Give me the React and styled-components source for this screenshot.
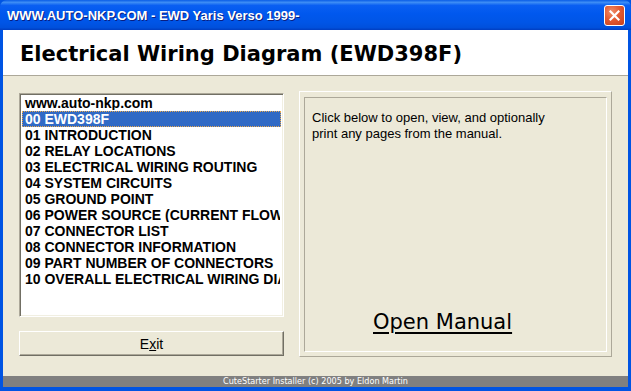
import styled, { createGlobalStyle } from 'styled-components';

const FACE = `#ECE9D8`;
const SHADOW = `#ACA899`;
const DARK = `#716F64`;
const XP_BLUE = `#0054E3`;

const GlobalStyle = createGlobalStyle`
  html, body {
    margin: 0;
    padding: 0;
    background: #fff;
  }
`;

const items = [
  'www.auto-nkp.com',
  '00 EWD398F',
  '01 INTRODUCTION',
  '02 RELAY LOCATIONS',
  '03 ELECTRICAL WIRING ROUTING',
  '04 SYSTEM CIRCUITS',
  '05 GROUND POINT',
  '06 POWER SOURCE (CURRENT FLOW',
  '07 CONNECTOR LIST',
  '08 CONNECTOR INFORMATION',
  '09 PART NUMBER OF CONNECTORS',
  '10 OVERALL ELECTRICAL WIRING DIA',
];

export default function App() {
  return (
    <>
      <GlobalStyle />
      <Window>
        <TitleBar>
          <Caption>WWW.AUTO-NKP.COM - EWD Yaris Verso 1999-</Caption>
          <CloseButton aria-label="Close">
            <svg width="11" height="11" viewBox="0 0 11 11">
              <path d="M1.5 1.5 L9.5 9.5 M9.5 1.5 L1.5 9.5" stroke="#fff" strokeWidth="2.2" strokeLinecap="square" />
            </svg>
          </CloseButton>
        </TitleBar>
        <Client>
          <Header>Electrical Wiring Diagram (EWD398F)</Header>
          <Main>
            <LeftColumn>
              <ListBox>
                {items.map((item, i) => (
                  <ListItem key={item} $selected={i === 1}>
                    {item}
                  </ListItem>
                ))}
              </ListBox>
              <Button>
                E<u>x</u>it
              </Button>
            </LeftColumn>
            <Panel>
              <PanelInner>
                <Info>
                  Click below to open, view, and optionally
                  <br />
                  print any pages from the manual.
                </Info>
                <OpenLink href="#">Open Manual</OpenLink>
              </PanelInner>
            </Panel>
          </Main>
          <StatusBar>CuteStarter Installer (c) 2005 by Eldon Martin</StatusBar>
        </Client>
      </Window>
    </>
  );
}

const Window = styled.div`
  width: 631px;
  height: 391px;
  display: flex;
  flex-direction: column;
  background: ${XP_BLUE};
  box-sizing: border-box;
  padding-bottom: 4px;
  overflow: hidden;
`;

const TitleBar = styled.div`
  height: 30px;
  flex: none;
  display: flex;
  align-items: center;
  justify-content: space-between;
  padding: 0 6px 0 7px;
  border-radius: 7px 7px 0 0;
  background: linear-gradient(
    #0A5DE6 0%,
    #3D8DF5 8%,
    #0A5FF2 18%,
    #0058EE 45%,
    #0055E6 75%,
    #0050DC 92%,
    #003DC0 100%
  );
`;

const Caption = styled.div`
  color: #fff;
  font-family: 'Liberation Sans', Arial, sans-serif;
  font-weight: bold;
  font-size: 13px;
  text-shadow: 1px 1px 0 #0A1E80;
`;

const CloseButton = styled.button`
  width: 21px;
  height: 21px;
  padding: 0;
  margin-top: 1px;
  display: flex;
  align-items: center;
  justify-content: center;
  border: 1px solid #fff;
  border-radius: 3px;
  background: radial-gradient(circle at 35% 30%, #F08E6A 0%, #E35A32 45%, #C8401C 100%);
`;

const Client = styled.div`
  flex: 1;
  margin: 0 3px;
  display: flex;
  flex-direction: column;
  background: ${FACE};
`;

const Header = styled.div`
  height: 46px;
  flex: none;
  box-sizing: border-box;
  background: #fff;
  border-bottom: 1px solid ${SHADOW};
  padding: 12px 0 0 17px;
  font-family: 'DejaVu Sans', Verdana, sans-serif;
  font-weight: bold;
  font-size: 21px;
  color: #000;
`;

const Main = styled.div`
  flex: 1;
  display: flex;
  gap: 15px;
  padding: 15px 16px 18px 16px;
`;

const LeftColumn = styled.div`
  width: 265px;
  display: flex;
  flex-direction: column;
  gap: 14px;
  padding-top: 2px;
`;

const ListBox = styled.div`
  height: 224px;
  box-sizing: border-box;
  background: #fff;
  border-style: solid;
  border-width: 1px;
  border-color: ${SHADOW} #fff #fff ${SHADOW};
  box-shadow: inset 1px 1px 0 ${DARK}, inset -1px -1px 0 #F1EFE2;
  padding: 1px 2px;
  overflow: hidden;
`;

const ListItem = styled.div`
  height: 16px;
  line-height: 14px;
  box-sizing: border-box;
  padding-left: 2px;
  white-space: nowrap;
  overflow: hidden;
  font-family: 'Liberation Sans', Arial, sans-serif;
  font-weight: bold;
  font-size: 14px;
  color: ${(p) => (p.$selected ? '#fff' : '#000')};
  background: ${(p) => (p.$selected ? '#316AC5' : 'transparent')};
  border: 1px dotted ${(p) => (p.$selected ? '#E9A94F' : 'transparent')};
`;

const Button = styled.button`
  height: 25px;
  box-sizing: border-box;
  background: ${FACE};
  border-style: solid;
  border-width: 1px;
  border-color: #fff ${DARK} ${DARK} #fff;
  box-shadow: inset -1px -1px 0 ${SHADOW};
  font-family: 'Liberation Sans', Arial, sans-serif;
  font-size: 14px;
  color: #000;
  padding: 0;
`;

const Panel = styled.div`
  width: 313px;
  height: 266px;
  box-sizing: border-box;
  border-style: solid;
  border-width: 1px;
  border-color: #fff ${SHADOW} ${SHADOW} #fff;
  padding: 5px 4px 4px 4px;
  display: flex;
`;

const PanelInner = styled.div`
  flex: 1;
  box-sizing: border-box;
  border-style: solid;
  border-width: 1px;
  border-color: ${SHADOW} #fff #fff ${SHADOW};
  display: flex;
  flex-direction: column;
  justify-content: space-between;
  padding: 12px 8px 17px 7px;
`;

const Info = styled.div`
  font-family: 'Liberation Sans', Arial, sans-serif;
  font-size: 13px;
  line-height: 16px;
  color: #000;
`;

const OpenLink = styled.a`
  align-self: flex-start;
  margin-left: 61px;
  font-family: 'DejaVu Sans', Verdana, sans-serif;
  font-size: 21px;
  color: #000;
  text-decoration: underline;
  text-underline-offset: 3px;
`;

const StatusBar = styled.div`
  height: 11px;
  flex: none;
  background: #808080;
  color: #fff;
  text-align: center;
  font-family: 'DejaVu Sans Condensed', 'DejaVu Sans', sans-serif;
  font-size: 9px;
  line-height: 11px;
`;
